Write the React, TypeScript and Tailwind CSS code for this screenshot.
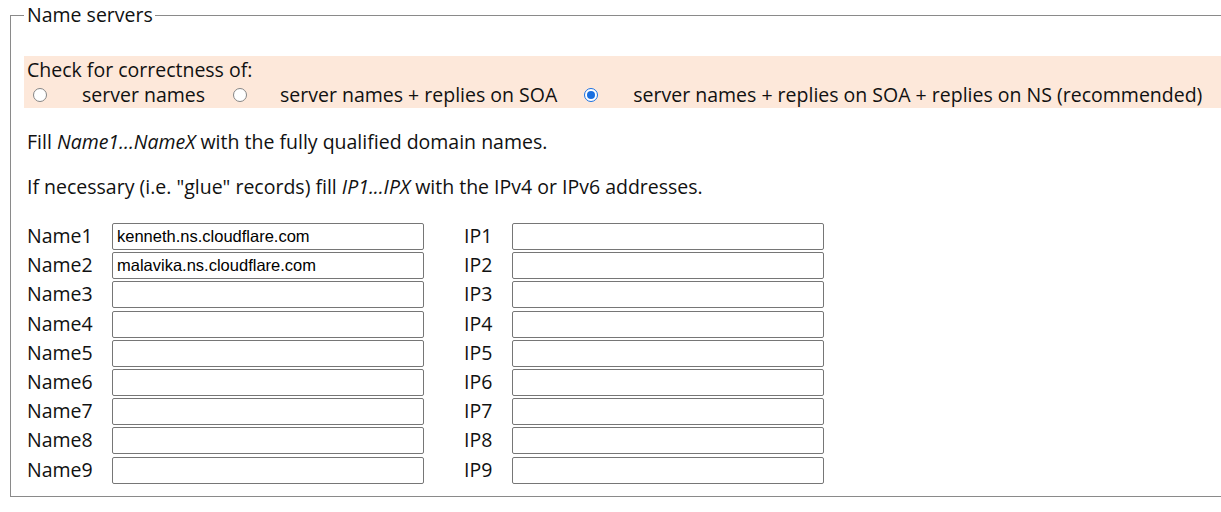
import React from "react";

const rows = [1, 2, 3, 4, 5, 6, 7, 8, 9];
const names: Record<number, string> = {
  1: "kenneth.ns.cloudflare.com",
  2: "malavika.ns.cloudflare.com",
};

function Field({ value }: { value?: string }) {
  return (
    <input
      type="text"
      defaultValue={value ?? ""}
      className="h-[27px] w-[312px] rounded-[2px] border border-[#767676] bg-white px-[4px] font-['Liberation_Sans',Arial,sans-serif] text-[16.5px] text-black outline-none"
    />
  );
}

function Radio({ checked, className }: { checked?: boolean; className?: string }) {
  if (checked) {
    return (
      <span className={`flex h-[14px] w-[14px] shrink-0 items-center justify-center rounded-full border border-[#1a6fe0] bg-white ${className}`}>
        <span className="block h-[8px] w-[8px] rounded-full bg-[#1a6fe0]" />
      </span>
    );
  }
  return <span className={`block h-[14px] w-[14px] shrink-0 rounded-full border border-[#858585] bg-white ${className}`} />;
}

export default function App() {
  return (
    <div className="h-[512px] w-[1221px] overflow-hidden bg-white font-['Open_Sans',sans-serif] text-[19.5px] text-[#111]">
      <fieldset className="ml-[10px] mt-[4px] w-[1260px] border border-[#8a8a8a] pb-[12px] pl-[13px] pr-0">
        <legend className="px-[2px] pl-[3px] leading-[22px]">Name servers</legend>

        <div className="mt-[30px] bg-[#fde8da] pl-[3px] pt-[2px]">
          <div className="leading-[24px]">Check for correctness of:</div>
          <div className="flex items-center leading-[26px]">
            <Radio className="ml-[6px]" />
            <span className="ml-[35px]">server names</span>
            <Radio className="ml-[28px]" />
            <span className="ml-[33px]">server names + replies on SOA</span>
            <Radio checked className="ml-[27px]" />
            <span className="ml-[35px]">server names + replies on SOA + replies on NS (recommended)</span>
          </div>
        </div>

        <p className="mt-[22px] pl-[3px] leading-[24px]">
          Fill <i>Name1...NameX</i> with the fully qualified domain names.
        </p>
        <p className="mt-[21px] pl-[3px] leading-[24px]">
          If necessary (i.e. "glue" records) fill <i>IP1...IPX</i> with the IPv4 or IPv6 addresses.
        </p>

        <div className="mt-[24px] grid grid-cols-[85px_312px_40px_48px_312px] gap-y-[2.2px] pl-[3px]">
          {rows.map((n) => (
            <React.Fragment key={n}>
              <span className="leading-[25px]">Name{n}</span>
              <Field value={names[n]} />
              <span />
              <span className="leading-[25px]">IP{n}</span>
              <Field />
            </React.Fragment>
          ))}
        </div>
      </fieldset>
    </div>
  );
}
